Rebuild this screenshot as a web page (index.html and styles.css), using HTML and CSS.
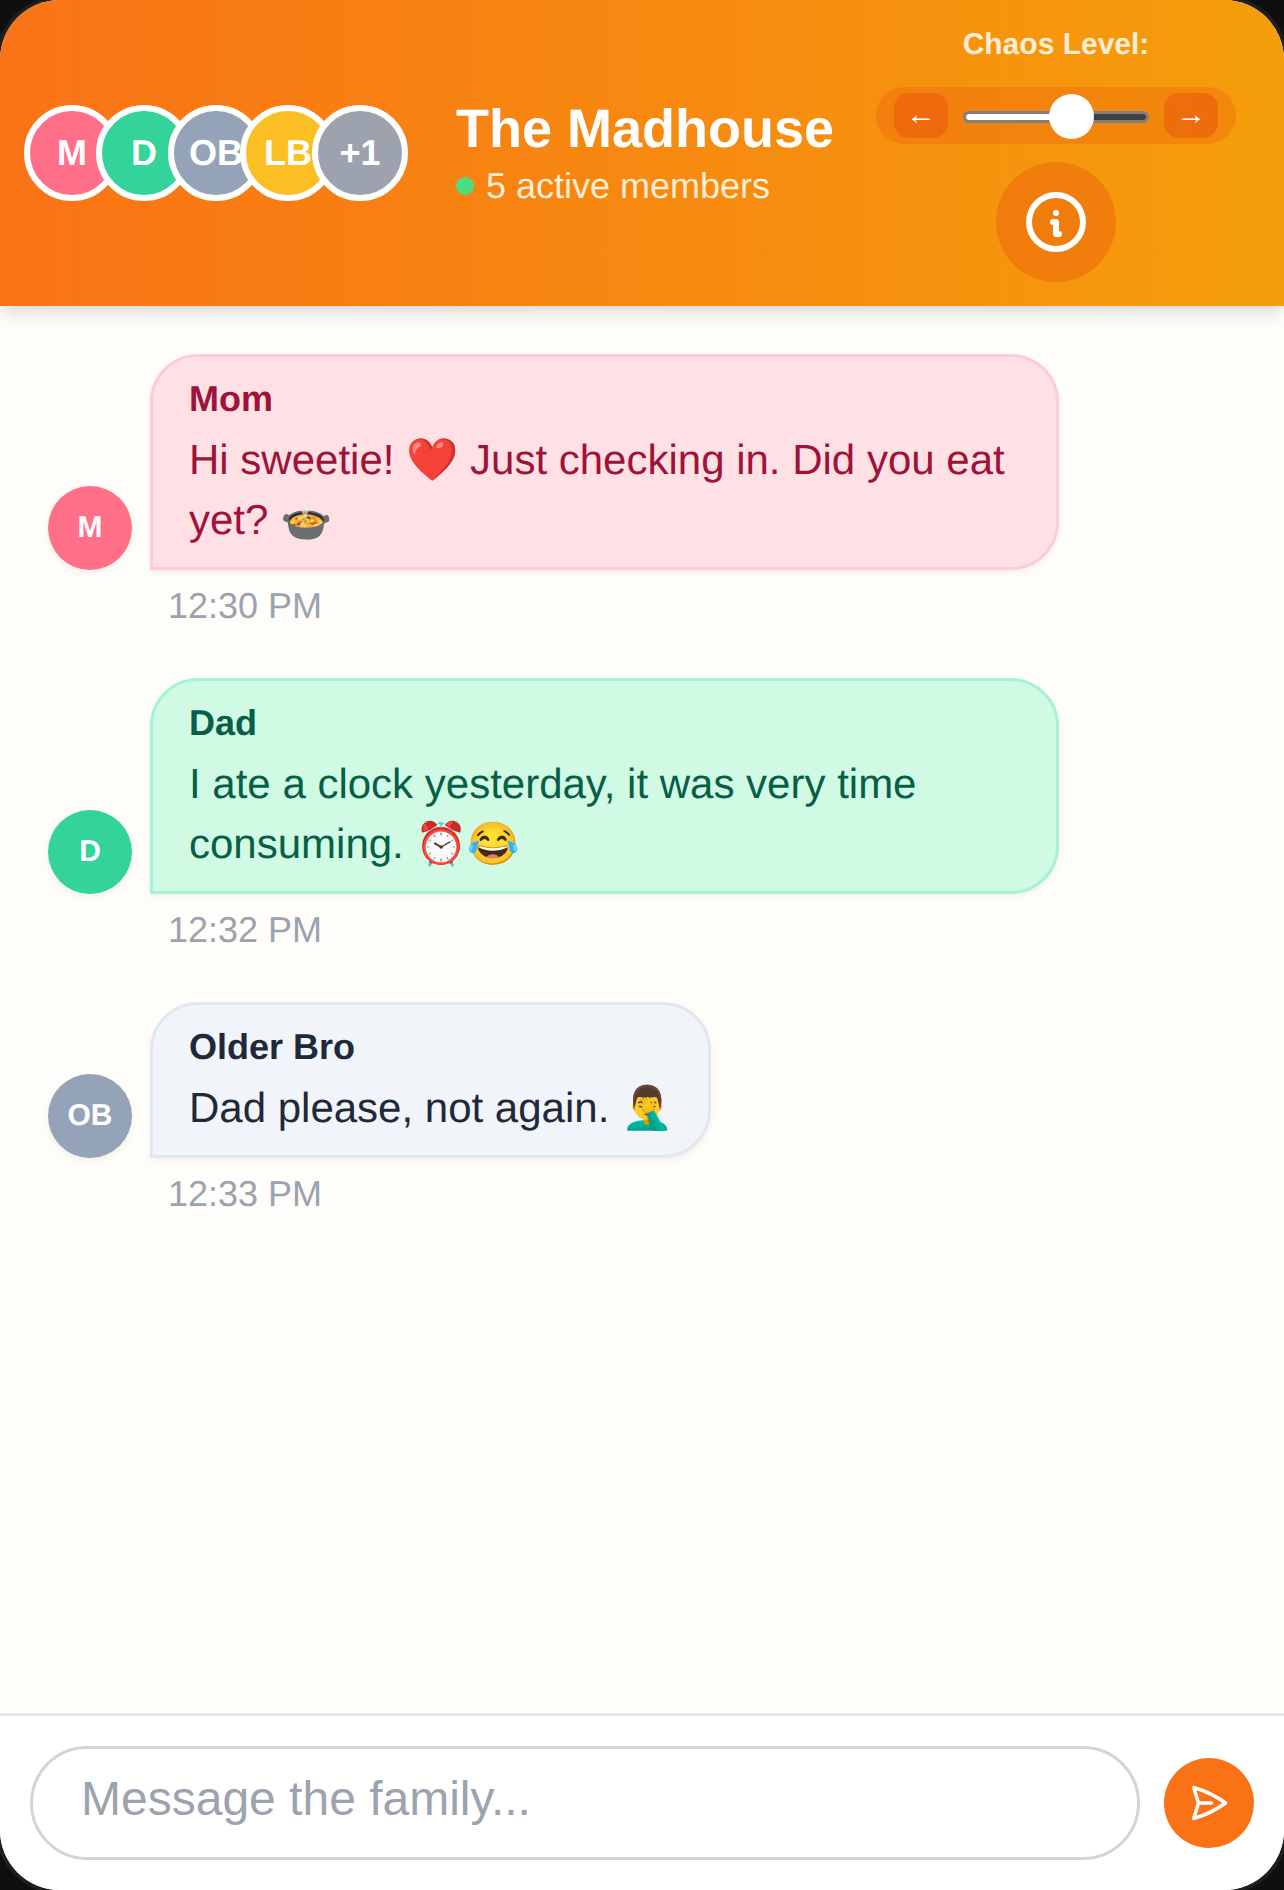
FILE: index.html
```html
<!DOCTYPE html>
<html lang="en">
<head>
<meta charset="utf-8">
<title>The Madhouse</title>
<link rel="stylesheet" href="styles.css">
</head>
<body>
<main class="app">
  <header class="header">
    <div class="header-left">
      <div class="stack">
        <div class="stack-item tone-mom">M</div>
        <div class="stack-item tone-dad">D</div>
        <div class="stack-item tone-bro">OB</div>
        <div class="stack-item tone-little">LB</div>
        <div class="stack-item tone-more">+1</div>
      </div>
      <div class="title-block">
        <h1 class="title">The Madhouse</h1>
        <p class="members"><span class="dot"></span>5 active members</p>
      </div>
    </div>
    <div class="header-right">
      <div class="chaos-label">Chaos Level:</div>
      <div class="chaos-pill">
        <button class="chaos-btn" type="button">←</button>
        <div class="range">
          <div class="track"><div class="fill"></div></div>
          <div class="thumb"></div>
        </div>
        <button class="chaos-btn" type="button">→</button>
      </div>
      <button class="info-btn" type="button" aria-label="Info">
        <svg class="info-icon" viewBox="0 0 24 24" fill="none" stroke="currentColor" stroke-width="2" stroke-linecap="round" stroke-linejoin="round"><path d="M3 12a9 9 0 1 0 18 0a9 9 0 0 0 -18 0"/><path d="M12 9h.01"/><path d="M11 12h1v4h1"/></svg>
      </button>
    </div>
  </header>

  <section class="messages">
    <article class="msg">
      <div class="msg-row">
        <div class="msg-avatar tone-mom">M</div>
        <div class="bubble bubble-mom">
          <div class="sender">Mom</div>
          <div class="text">Hi sweetie! ❤️ Just checking in. Did you eat yet? 🍲</div>
        </div>
      </div>
      <div class="time">12:30 PM</div>
    </article>
    <article class="msg">
      <div class="msg-row">
        <div class="msg-avatar tone-dad">D</div>
        <div class="bubble bubble-dad">
          <div class="sender">Dad</div>
          <div class="text">I ate a clock yesterday, it was very time consuming. ⏰😂</div>
        </div>
      </div>
      <div class="time">12:32 PM</div>
    </article>
    <article class="msg">
      <div class="msg-row">
        <div class="msg-avatar tone-bro">OB</div>
        <div class="bubble bubble-bro">
          <div class="sender">Older Bro</div>
          <div class="text">Dad please, not again. 🤦‍♂️</div>
        </div>
      </div>
      <div class="time">12:33 PM</div>
    </article>
  </section>

  <footer class="composer">
    <input class="composer-input" type="text" placeholder="Message the family...">
    <button class="send-btn" type="button" aria-label="Send">
      <svg class="send-icon" viewBox="0 0 24 24" fill="none" stroke="currentColor" stroke-width="2" stroke-linecap="round" stroke-linejoin="round"><path d="M6 12L3.269 3.126A59.768 59.768 0 0121.485 12 59.77 59.77 0 013.27 20.876L5.999 12zm0 0h7.5"/></svg>
    </button>
  </footer>
</main>
</body>
</html>
```

FILE: styles.css
```css
* {
  box-sizing: border-box;
}

html,
body {
  margin: 0;
  height: 100%;
}

body {
  background: #0f0f0f;
  font-family: "Liberation Sans", Arial, "Noto Color Emoji", sans-serif;
  text-rendering: geometricPrecision;
  overflow: hidden;
}

.app {
  width: 1284px;
  height: 1890px;
  display: flex;
  flex-direction: column;
  background: #fffdf9;
  border-radius: 60px;
  overflow: hidden;
  box-shadow: 0 0 0 4px #1f1f1f;
}

.header {
  position: relative;
  z-index: 2;
  height: 306px;
  flex: none;
  display: flex;
  align-items: center;
  justify-content: space-between;
  padding: 24px 48px 24px 24px;
  background: linear-gradient(to right, #f97316, #f59e0b);
  box-shadow: 0 12px 18px -3px rgba(0, 0, 0, 0.1), 0 6px 9px -3px rgba(0, 0, 0, 0.05);
  color: #fff;
}

.header-left {
  display: flex;
  align-items: center;
  gap: 48px;
}

.stack {
  display: flex;
}

.stack-item {
  position: relative;
  width: 96px;
  height: 96px;
  display: flex;
  align-items: center;
  justify-content: center;
  border: 6px solid #fff;
  border-radius: 50%;
  font-size: 36px;
  font-weight: 700;
  color: #fff;
}

.stack-item + .stack-item {
  margin-left: -24px;
}

.tone-mom { background: #ff7088; }
.tone-dad { background: #34d399; }
.tone-bro { background: #94a3b8; }
.tone-little { background: #fbbf24; }
.tone-more { background: #9ca3af; }

.title {
  margin: 0;
  font-size: 54px;
  line-height: 66px;
  font-weight: 700;
}

.members {
  margin: 0;
  display: flex;
  align-items: center;
  gap: 12px;
  font-size: 36px;
  line-height: 48px;
  color: #ffedd5;
}

.dot {
  width: 18px;
  height: 18px;
  border-radius: 50%;
  background: #4ade80;
}

.header-right {
  display: flex;
  flex-direction: column;
  align-items: center;
}

.chaos-label {
  font-size: 30px;
  line-height: 42px;
  font-weight: 700;
  color: #ffedd5;
  margin-bottom: 21px;
}

.chaos-pill {
  display: flex;
  align-items: center;
  gap: 15px;
  width: 360px;
  padding: 6px 18px;
  border-radius: 29px;
  background: rgba(234, 88, 12, 0.3);
  margin-bottom: 18px;
}

.chaos-btn {
  width: 54px;
  height: 45px;
  padding: 0 0 3px;
  border: 0;
  border-radius: 15px;
  background: rgba(234, 88, 12, 0.55);
  color: #fff;
  font-family: inherit;
  font-size: 30px;
  line-height: 42px;
}

.range {
  position: relative;
  width: 186px;
  height: 45px;
  display: flex;
  align-items: center;
}

.track {
  width: 100%;
  height: 12px;
  margin-top: 3px;
  border: 3px solid #808080;
  border-radius: 6px;
  background: #404040;
  overflow: hidden;
}

.fill {
  width: 50%;
  height: 100%;
  background: #fff;
}

.thumb {
  position: absolute;
  left: 86px;
  top: 1px;
  width: 45px;
  height: 45px;
  border-radius: 50%;
  background: #fff;
}

.info-btn {
  width: 120px;
  height: 120px;
  padding: 0;
  border: 0;
  border-radius: 50%;
  background: rgba(234, 88, 12, 0.4);
  color: #fff;
  display: flex;
  align-items: center;
  justify-content: center;
}

.info-icon {
  width: 72px;
  height: 72px;
}

.messages {
  flex: 1;
  min-height: 0;
  display: flex;
  flex-direction: column;
  gap: 48px;
  padding: 48px;
}

.msg-row {
  display: flex;
  align-items: flex-end;
  gap: 18px;
}

.msg-avatar {
  width: 84px;
  height: 84px;
  flex: none;
  display: flex;
  align-items: center;
  justify-content: center;
  padding-bottom: 1px;
  border-radius: 50%;
  font-size: 30px;
  font-weight: 700;
  color: #fff;
  box-shadow: 0 3px 6px rgba(0, 0, 0, 0.06);
}

.bubble {
  max-width: 909px;
  padding: 18px 36px 17px;
  border: 3px solid;
  border-radius: 48px 48px 48px 0;
  box-shadow: 0 3px 6px rgba(0, 0, 0, 0.05);
}

.bubble-mom {
  background: #ffe1e5;
  border-color: #fecdd3;
  color: #9f1239;
}

.bubble-dad {
  background: #d1fae5;
  border-color: #a7f3d0;
  color: #065f46;
}

.bubble-bro {
  padding-right: 35px;
  background: #f1f5f9;
  border-color: #e2e8f0;
  color: #1e293b;
}

.sender {
  font-size: 36px;
  line-height: 48px;
  font-weight: 700;
  margin-bottom: 7px;
}

.text {
  font-size: 42px;
  line-height: 60px;
}

.time {
  margin-top: 12px;
  margin-left: 120px;
  font-size: 36px;
  line-height: 48px;
  color: #9ca3af;
}

.composer {
  flex: none;
  height: 177px;
  display: flex;
  align-items: center;
  gap: 24px;
  padding: 0 30px;
  border-top: 3px solid #e5e7eb;
  background: #fff;
}

.composer-input {
  flex: 1;
  min-width: 0;
  height: 114px;
  padding: 0 48px 9px;
  border: 3px solid #d1d5db;
  border-radius: 57px;
  background: #fff;
  font-family: inherit;
  font-size: 48px;
  color: #1f2937;
  outline: none;
}

.composer-input::placeholder {
  color: #9ca3af;
  opacity: 1;
}

.send-btn {
  width: 90px;
  height: 90px;
  flex: none;
  padding: 0;
  border: 0;
  border-radius: 50%;
  background: #f97316;
  color: #fff;
  display: flex;
  align-items: center;
  justify-content: center;
}

.send-icon {
  width: 42px;
  height: 42px;
}
```
